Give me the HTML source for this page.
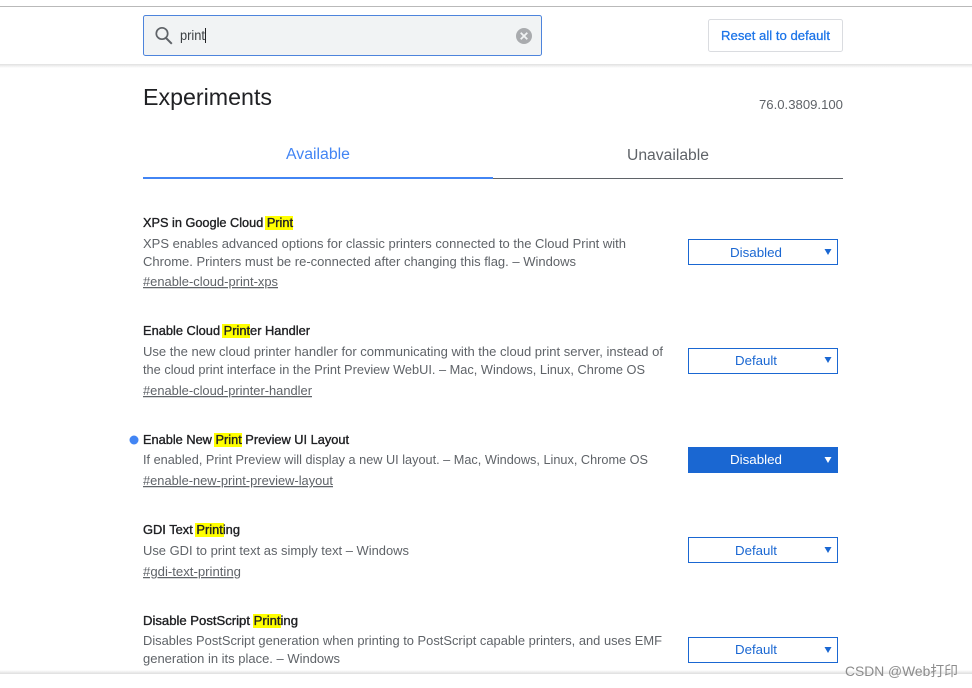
<!DOCTYPE html>
<html lang="en">
<head>
<meta charset="utf-8">
<title>Experiments</title>
<style>
html,body{margin:0;padding:0;background:#fff;width:972px;height:688px;overflow:hidden}
svg{display:block}
text{font-family:"Liberation Sans","Noto Sans CJK SC",sans-serif}
.t{font-size:12.5px;fill:#202124;stroke:#202124;stroke-width:.35px}
.d{font-size:12.5px;fill:#5f6368}
.l{font-size:12.5px;fill:#5f6368;text-decoration:underline}
.s{font-size:13px;fill:#1a67d2}
.b{fill:#fff;stroke:#1a67d2;stroke-width:1}
</style>
</head>
<body>
<svg width="972" height="688" viewBox="0 0 972 688" xmlns="http://www.w3.org/2000/svg">
<defs>
<linearGradient id="sh" x1="0" y1="0" x2="0" y2="1"><stop offset="0" stop-color="#e0e0e0"/><stop offset="1" stop-color="#fff"/></linearGradient>
<linearGradient id="sh2" x1="0" y1="0" x2="0" y2="1"><stop offset="0" stop-color="#fff"/><stop offset="1" stop-color="#dedede"/></linearGradient>
</defs>
<rect x="0" y="6" width="972" height="1" fill="#b9b9b9"/>
<rect x="0" y="64" width="972" height="4" fill="url(#sh)"/>

<rect x="143.5" y="15.5" width="398" height="40" rx="2" fill="#f1f3f4" stroke="#4d84dc"/>
<circle cx="162" cy="33.5" r="5.7" fill="none" stroke="#5f6368" stroke-width="1.7"/>
<path d="M166 38l5.8 5.8" stroke="#5f6368" stroke-width="2" fill="none"/>
<text x="180" y="40" font-size="13.5" fill="#3c4043" textLength="25" lengthAdjust="spacingAndGlyphs">print</text>
<rect x="205" y="28" width="1" height="15" fill="#202124"/>
<circle cx="524" cy="36" r="8" fill="#a9abae"/>
<path d="M520.7 32.7l6.6 6.6M527.3 32.7l-6.6 6.6" stroke="#f1f3f4" stroke-width="1.8" fill="none"/>

<rect x="708.5" y="19.5" width="134" height="32" rx="2" fill="#fff" stroke="#dadce0"/>
<text x="721" y="40" font-size="12.5" fill="#1a73e8" stroke="#1a73e8" stroke-width=".25" textLength="109" lengthAdjust="spacingAndGlyphs">Reset all to default</text>

<text x="143" y="105" font-size="23.5" fill="#202124" textLength="129" lengthAdjust="spacingAndGlyphs">Experiments</text>
<text x="759" y="109" font-size="12.5" fill="#5f6368" textLength="84" lengthAdjust="spacingAndGlyphs">76.0.3809.100</text>

<text x="286" y="159" font-size="15.5" fill="#4285f4" textLength="64" lengthAdjust="spacingAndGlyphs">Available</text>
<text x="627" y="160" font-size="15.5" fill="#5f6368" textLength="82" lengthAdjust="spacingAndGlyphs">Unavailable</text>
<rect x="493" y="178" width="350" height="1" fill="#5f6368"/>
<rect x="143" y="177" width="350" height="2" fill="#4285f4"/>

<!-- 1 -->
<rect x="265" y="216" width="28" height="14" fill="#ff0"/>
<text class="t" x="143" y="227" textLength="150" lengthAdjust="spacingAndGlyphs">XPS in Google Cloud Print</text>
<text class="d" x="143" y="248" textLength="483" lengthAdjust="spacingAndGlyphs">XPS enables advanced options for classic printers connected to the Cloud Print with</text>
<text class="d" x="143" y="266" textLength="433" lengthAdjust="spacingAndGlyphs">Chrome. Printers must be re-connected after changing this flag. – Windows</text>
<text class="l" x="143" y="286" textLength="135" lengthAdjust="spacingAndGlyphs">#enable-cloud-print-xps</text>
<rect class="b" x="688.5" y="239.5" width="149" height="25"/>
<text class="s" x="730" y="257" textLength="52" lengthAdjust="spacingAndGlyphs">Disabled</text>
<path d="M824.5 249h7l-3.5 6z" fill="#1a67d2"/>

<!-- 2 -->
<rect x="222" y="324" width="28" height="14" fill="#ff0"/>
<text class="t" x="143" y="335" textLength="167" lengthAdjust="spacingAndGlyphs">Enable Cloud Printer Handler</text>
<text class="d" x="143" y="356" textLength="520" lengthAdjust="spacingAndGlyphs">Use the new cloud printer handler for communicating with the cloud print server, instead of</text>
<text class="d" x="143" y="374" textLength="502" lengthAdjust="spacingAndGlyphs">the cloud print interface in the Print Preview WebUI. – Mac, Windows, Linux, Chrome OS</text>
<text class="l" x="143" y="395" textLength="169" lengthAdjust="spacingAndGlyphs">#enable-cloud-printer-handler</text>
<rect class="b" x="688.5" y="348.5" width="149" height="25"/>
<text class="s" x="735" y="365" textLength="42" lengthAdjust="spacingAndGlyphs">Default</text>
<path d="M824.5 357h7l-3.5 6z" fill="#1a67d2"/>

<!-- 3 -->
<circle cx="134" cy="440" r="4.5" fill="#4285f4"/>
<rect x="214" y="433" width="28" height="14" fill="#ff0"/>
<text class="t" x="143" y="444" textLength="206" lengthAdjust="spacingAndGlyphs">Enable New Print Preview UI Layout</text>
<text class="d" x="143" y="464" textLength="505" lengthAdjust="spacingAndGlyphs">If enabled, Print Preview will display a new UI layout. – Mac, Windows, Linux, Chrome OS</text>
<text class="l" x="143" y="485" textLength="190" lengthAdjust="spacingAndGlyphs">#enable-new-print-preview-layout</text>
<rect x="688" y="447" width="150" height="26" fill="#1a67d2"/>
<text class="s" x="730" y="464" style="fill:#fff" textLength="52" lengthAdjust="spacingAndGlyphs">Disabled</text>
<path d="M824.5 457h7l-3.5 6z" fill="#fff"/>

<!-- 4 -->
<rect x="195" y="523" width="29" height="14" fill="#ff0"/>
<text class="t" x="143" y="534" textLength="97" lengthAdjust="spacingAndGlyphs">GDI Text Printing</text>
<text class="d" x="143" y="555" textLength="266" lengthAdjust="spacingAndGlyphs">Use GDI to print text as simply text – Windows</text>
<text class="l" x="143" y="576" textLength="98" lengthAdjust="spacingAndGlyphs">#gdi-text-printing</text>
<rect class="b" x="688.5" y="537.5" width="149" height="25"/>
<text class="s" x="735" y="555" textLength="42" lengthAdjust="spacingAndGlyphs">Default</text>
<path d="M824.5 547h7l-3.5 6z" fill="#1a67d2"/>

<!-- 5 -->
<rect x="253" y="614" width="28" height="14" fill="#ff0"/>
<text class="t" x="143" y="625" textLength="155" lengthAdjust="spacingAndGlyphs">Disable PostScript Printing</text>
<text class="d" x="143" y="645" textLength="519" lengthAdjust="spacingAndGlyphs">Disables PostScript generation when printing to PostScript capable printers, and uses EMF</text>
<text class="d" x="143" y="663" textLength="197" lengthAdjust="spacingAndGlyphs">generation in its place. – Windows</text>
<rect class="b" x="688.5" y="637.5" width="149" height="25"/>
<text class="s" x="735" y="654" textLength="42" lengthAdjust="spacingAndGlyphs">Default</text>
<path d="M824.5 647h7l-3.5 6z" fill="#1a67d2"/>

<rect x="0" y="670" width="972" height="4" fill="url(#sh2)"/>
<text x="845" y="676" font-size="14" fill="#8c8c8c" textLength="113" lengthAdjust="spacingAndGlyphs">CSDN @Web打印</text>
</svg>
</body>
</html>
